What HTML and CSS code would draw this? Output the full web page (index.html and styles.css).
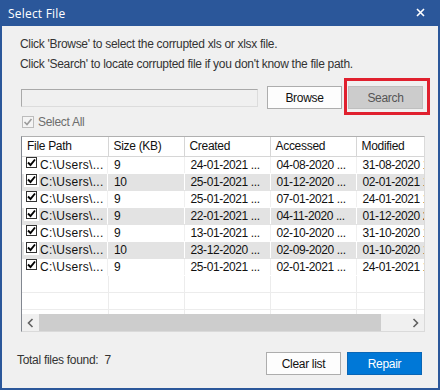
FILE: index.html
```html
<!DOCTYPE html>
<html lang="en">
<head>
  <meta charset="UTF-8">
  <title>Select File</title>
  <link rel="stylesheet" href="styles.css">
</head>
<body>
  <div class="window">
    <div class="titlebar">
      <span class="title">Select File</span>
      <svg class="close-icon" width="9" height="9" viewBox="0 0 9 9">
        <path d="M1 1 L8 8 M8 1 L1 8" stroke="#fff" stroke-width="1.6" fill="none"/>
      </svg>
    </div>

    <div class="content">
      <p class="hint">Click 'Browse' to select the corrupted xls or xlsx file.</p>
      <p class="hint">Click 'Search' to locate corrupted file if you don't know the file path.</p>

      <div class="path-row">
        <input type="text" class="path-input" disabled>
        <button class="btn">Browse</button>
        <div class="search-wrap">
          <button class="btn btn-search">Search</button>
          <span class="highlight"></span>
        </div>
      </div>

      <label class="select-all">
        <span class="check check-disabled">
          <svg width="10" height="10" viewBox="0 0 10 10"><path d="M1.5 5 L4 7.5 L8.5 2" stroke="#9c9c9c" stroke-width="1.6" fill="none"/></svg>
        </span>
        Select All
      </label>

      <div class="file-grid">
        <div class="grid-body">
          <table class="file-table">
            <colgroup>
              <col style="width: 86px"><col style="width: 76px"><col style="width: 86px"><col style="width: 86px"><col style="width: 96px">
            </colgroup>
            <thead>
              <tr><th>File Path</th><th>Size (KB)</th><th>Created</th><th>Accessed</th><th>Modified</th></tr>
            </thead>
            <tbody id="file-rows"></tbody>
          </table>
        </div>
        <div class="hscroll">
          <svg class="arrow" width="8" height="10" viewBox="0 0 8 10"><path d="M6 1 L2 5 L6 9" stroke="#606060" stroke-width="1.6" fill="none"/></svg>
          <div class="track"><div class="thumb"></div></div>
          <svg class="arrow" width="8" height="10" viewBox="0 0 8 10"><path d="M2 1 L6 5 L2 9" stroke="#606060" stroke-width="1.6" fill="none"/></svg>
        </div>
      </div>

      <div class="footer">
        <span class="total">Total files found:&nbsp; 7</span>
        <div class="footer-buttons">
          <button class="btn">Clear list</button>
          <button class="btn btn-primary">Repair</button>
        </div>
      </div>
    </div>
  </div>

  <script>
    const files = [
      ['9', '24-01-2021 ...', '04-08-2020 ...', '31-08-2020 11:24'],
      ['10', '25-01-2021 ...', '01-12-2020 ...', '02-01-2021 10:02'],
      ['9', '25-01-2021 ...', '07-01-2021 ...', '24-01-2021 16:40'],
      ['9', '22-01-2021 ...', '04-11-2020 ...', '01-12-2020 21:15'],
      ['9', '13-01-2021 ...', '02-10-2020 ...', '31-10-2020 12:10'],
      ['10', '23-12-2020 ...', '02-09-2020 ...', '01-10-2020 13:05'],
      ['9', '25-01-2021 ...', '02-01-2021 ...', '24-01-2021 17:33']
    ];

    const checkSvg = '<svg width="9" height="9" viewBox="0 0 9 9"><path d="M1 4.5 L3.5 7 L8 1.5" stroke="#000" stroke-width="1.9" fill="none"/></svg>';

    const body = document.getElementById('file-rows');
    files.forEach(file => {
      const row = document.createElement('tr');
      row.innerHTML = `
        <td class="path-cell"><span class="check-box">${checkSvg}</span><span class="path-text">C:\\Users\\...</span></td>
        <td>${file[0]}</td>
        <td>${file[1]}</td>
        <td>${file[2]}</td>
        <td class="clip-cell">${file[3]}</td>
      `;
      body.appendChild(row);
    });

    // empty rows fill the rest of the list
    for (let i = 0; i < 3; i++) {
      const row = document.createElement('tr');
      row.className = 'empty';
      row.innerHTML = '<td></td><td></td><td></td><td></td><td></td>';
      body.appendChild(row);
    }
  </script>
</body>
</html>
```

FILE: styles.css
```css
* {
  box-sizing: border-box;
}

body {
  margin: 0;
  padding: 0;
  font-family: 'Liberation Sans', Arial, sans-serif;
  font-size: 12px;
  letter-spacing: -0.3px;
  background-color: #2b579a;
}

.window {
  width: 440px;
  height: 390px;
  display: flex;
  flex-direction: column;
  background-color: #2b579a;
  padding: 0 2px 2px 2px;
}

.titlebar {
  height: 26px;
  display: flex;
  align-items: center;
  justify-content: space-between;
  padding: 0 13px 0 6px;
  color: #fff;
  font-family: 'Open Sans', sans-serif;
  letter-spacing: 0.2px;
}

.title {
  font-size: 12px;
}

.close-icon {
  margin-top: -2px;
}

.content {
  flex: 1;
  background-color: #f0f0f0;
  padding: 8px 14px 0 18px;
  display: flex;
  flex-direction: column;
  color: #222;
}

.hint {
  margin: 0;
  line-height: 20px;
  color: #333;
}

/* path input + buttons */
.path-row {
  display: flex;
  align-items: center;
  margin-top: 12px;
  height: 23px;
}

.path-input {
  width: 237px;
  height: 18px;
  margin: 0 9px 0 1px;
  border: 1px solid #a9a9a9;
  border-right-color: #dcdcdc;
  border-bottom-color: #dcdcdc;
  background-color: #f0f0f0;
  outline: none;
}

.btn {
  width: 75px;
  height: 23px;
  padding: 0;
  font-family: 'Liberation Sans', Arial, sans-serif;
  font-size: 12px;
  letter-spacing: -0.3px;
  color: #111;
  background-color: #fdfdfd;
  border: 1px solid #adadad;
  border-radius: 0;
}

.search-wrap {
  position: relative;
  margin-left: 6px;
}

.btn-search {
  background-color: #cccccc;
  border-color: #bfbfbf;
  color: #555;
}

.highlight {
  position: absolute;
  left: -4px;
  top: -8px;
  width: 86px;
  height: 37px;
  border: 3px solid #e0202e;
}

/* select all */
.select-all {
  display: flex;
  align-items: center;
  gap: 4px;
  margin-top: 6px;
  margin-left: 2px;
  height: 14px;
  color: #6d6d6d;
}

.check {
  width: 12px;
  height: 12px;
  display: flex;
  align-items: center;
  justify-content: center;
  border: 1px solid #bcbcbc;
  background-color: #f4f4f4;
}

/* file list */
.file-grid {
  margin-top: 7px;
  margin-left: 1px;
  width: 404px;
  height: 196px;
  border: 1px solid #dadada;
  border-left-color: #828790;
  border-top-color: #b0b0b0;
  background-color: #fff;
  display: flex;
  flex-direction: column;
}

.grid-body {
  flex: 1;
  overflow: hidden;
}

.file-table {
  border-collapse: collapse;
  table-layout: fixed;
  width: 430px;
}

.file-table th {
  height: 19px;
  padding: 0 0 0 5px;
  text-align: left;
  font-weight: normal;
  color: #111;
  white-space: nowrap;
  overflow: hidden;
  background-color: #fff;
  border-right: 1px solid #d6d6d6;
  border-bottom: 1px solid #d6d6d6;
}

.file-table td {
  height: 17px;
  padding: 0 0 0 6px;
  white-space: nowrap;
  overflow: hidden;
  color: #111;
  border-right: 1px solid #f0f0f0;
  border-bottom: 1px solid #f0f0f0;
  line-height: 16px;
  letter-spacing: -0.4px;
}

.file-table td.clip-cell {
  text-overflow: clip;
}

.file-table tbody tr:nth-child(even) td {
  background-color: #e3e3e3;
  border-right-color: #fff;
  border-bottom-color: #e3e3e3;
}

.file-table tbody tr:nth-child(odd) td {
  border-bottom-color: #fff;
}

.file-table tbody tr.empty td {
  background-color: #fff;
  border-right-color: #ececec;
  border-bottom-color: #ececec;
}

.file-table td.path-cell {
  padding: 0;
}

.path-cell {
  display: flex;
}

.check-box {
  display: inline-flex;
  align-items: center;
  justify-content: center;
  width: 11px;
  height: 11px;
  margin: 0 3px 0 4px;
  border: 1px solid #333;
  background-color: #fff;
  vertical-align: -1px;
  box-shadow: 0 0 0 2px #fff;
}

.path-text {
  letter-spacing: 0.3px;
}

.hscroll {
  height: 17px;
  display: flex;
  align-items: center;
  background-color: #f0f0f0;
}

.hscroll .arrow {
  flex: 0 0 17px;
  padding: 0 4px;
  width: 17px;
}

.track {
  flex: 1;
  height: 17px;
  display: flex;
  align-items: center;
}

.thumb {
  width: 342px;
  height: 17px;
  background-color: #cdcdcd;
}

/* footer */
.footer {
  margin-top: 20px;
  display: flex;
  align-items: center;
  justify-content: space-between;
  margin-left: -3px;
  padding-right: 2px;
}

.total {
  color: #333;
  margin-top: -8px;
}

.footer-buttons {
  display: flex;
  gap: 6px;
}

.btn-primary {
  background-color: #0078d7;
  border-color: #0a66b5;
  color: #fff;
}
```
